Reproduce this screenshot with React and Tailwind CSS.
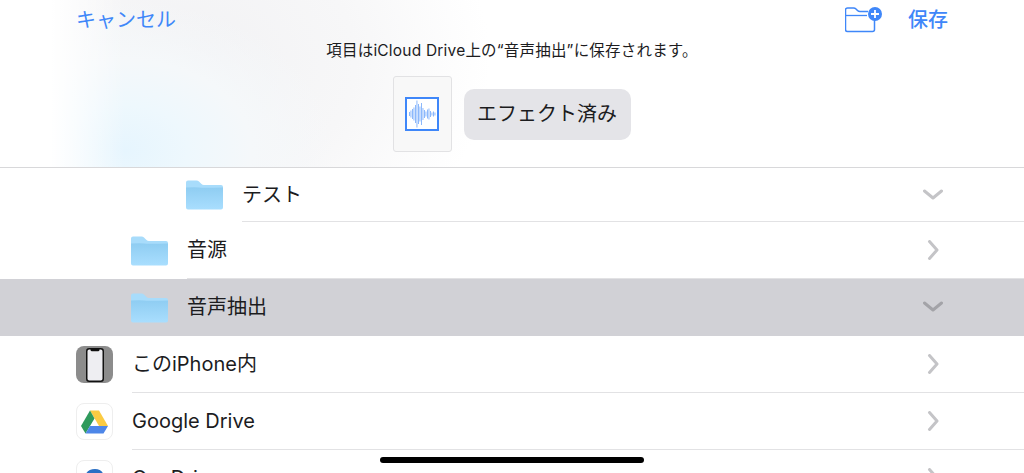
import React from 'react';

const rows = [
  { label: 'テスト', pad: 'pl-[186px]', icon: 'folder', open: true, height: 'h-[54px]' },
  { label: '音源', pad: 'pl-[131px]', icon: 'folder', height: 'h-[57px]' },
  { label: '音声抽出', pad: 'pl-[131px]', icon: 'folder', open: true, selected: true, height: 'h-[57px]' },
  { label: 'このiPhone内', pad: 'pl-[76px]', icon: 'iphone', height: 'h-[57px]' },
  { label: 'Google Drive', pad: 'pl-[76px]', icon: 'drive', height: 'h-[57px]' },
  { label: 'OneDrive', pad: 'pl-[76px]', icon: 'onedrive', height: 'h-[57px]' },
];

function FolderIcon() {
  return (
    <svg width="37" height="30" viewBox="0 0 37 30" className="shrink-0">
      <defs>
        <linearGradient id="folderFront" x1="0" y1="0" x2="0" y2="1">
          <stop offset="0" stopColor="#8fcdf2" />
          <stop offset="1" stopColor="#a9defe" />
        </linearGradient>
      </defs>
      <path d="M0 2.500A2 2 0 0 1 2 .5h8.500q1.500 0 2.500 1l2.500 2.500q1 1 2.500 1H35a2 2 0 0 1 2 2V10H0z" fill="#a8dcfb" />
      <path d="M0 7.500Q10 7 13 7.500T37 7.500V27.500a2 2 0 0 1-2 2H2a2 2 0 0 1-2-2z" fill="url(#folderFront)" />
    </svg>
  );
}

function IphoneIcon() {
  return (
    <div className="w-[37px] h-[37px] shrink-0 rounded-lg bg-[#8c8c8c] flex items-center justify-center">
      <svg width="18" height="34" viewBox="0 0 18 34">
        <rect x="0.750" y="0.750" width="16.500" height="32.500" rx="2.500" fill="#eeeef2" stroke="#111" strokeWidth="1.500" />
        <path d="M4.500 0.750h9v1a1.500 1.500 0 0 1-1.500 1.500H6a1.500 1.500 0 0 1-1.500-1.500z" fill="#111" />
      </svg>
    </div>
  );
}

function DriveIcon() {
  return (
    <div className="w-[37px] h-[37px] shrink-0 rounded-lg bg-white border border-[#eeeeee] flex items-center justify-center">
      <svg width="27" height="24" viewBox="0 0 27 24">
        <path d="M9 0.500h9l9 15.500h-9z" fill="#fbcb43" />
        <path d="M9 0.500l4.500 8L4.500 23.500 0 16z" fill="#2f9a5c" />
        <path d="M9 16h18l-4.500 7.500H4.500z" fill="#4d86e8" />
      </svg>
    </div>
  );
}

function OneDriveIcon() {
  return (
    <div className="w-[37px] h-[37px] shrink-0 rounded-lg bg-white border border-[#eeeeee] flex justify-center pt-[7px]">
      <svg width="30" height="22" viewBox="0 0 30 22">
        <path d="M6 21a5.500 5.500 0 0 1-1.500-10.800Q6 1 15 1q6.500 0 8.500 5.500a7 7 0 0 1 .5 14.500z" fill="#2a6fc4" />
      </svg>
    </div>
  );
}

function Chevron({ open, selected }) {
  const stroke = selected ? '#a3a3a8' : '#c4c4c7';
  return (
    <svg width="20" height="20" viewBox="0 0 20 20" className="shrink-0" fill="none" stroke={stroke} strokeWidth="3" strokeLinecap="round" strokeLinejoin="round">
      {open ? <path d="M1.500 6 10 13l8.500-7" /> : <path d="M6.500 1.500 14 10l-7.500 8.500" />}
    </svg>
  );
}

function Waveform() {
  const bars = [4, 7, 10, 13, 18, 27, 20, 15, 22, 12, 8, 5, 9, 11, 6, 3, 5, 3];
  return (
    <svg width="34" height="34" viewBox="0 0 34 34">
      <rect x="1" y="1" width="32" height="32" fill="#fff" stroke="#3f87f9" strokeWidth="2" />
      {bars.map((h, i) => (
        <rect key={i} x={4 + i * 1.500} y={17 - h / 2} width="0.900" height={h} fill="#7fb0fb" />
      ))}
    </svg>
  );
}

function NewFolderIcon() {
  return (
    <svg width="38" height="26" viewBox="0 0 38 26" fill="none">
      <path d="M29.500 12v10.500a2 2 0 0 1-2 2H2.500a2 2 0 0 1-2-2V3a2 2 0 0 1 2-2h6q1.500 0 2.500 1l1.500 1.500q1 1 2.500 1H23" stroke="#3f87f9" strokeWidth="1.500" />
      <path d="M1 8.500h21" stroke="#3f87f9" strokeWidth="1.300" />
      <circle cx="30" cy="7" r="7" fill="#3f87f9" />
      <path d="M30 3v8M26 7h8" stroke="#fff" strokeWidth="1.800" />
    </svg>
  );
}

function Row({ row }) {
  return (
    <div className={`${row.height} ${row.pad} flex items-center gap-[19px] ${row.selected ? 'bg-[#d1d1d6]' : 'bg-white'}`}>
      {row.icon === 'folder' && <FolderIcon />}
      {row.icon === 'iphone' && <IphoneIcon />}
      {row.icon === 'drive' && <DriveIcon />}
      {row.icon === 'onedrive' && <OneDriveIcon />}
      <div className={`flex-1 h-full flex items-center justify-between pr-[81px] border-b ${row.selected ? 'border-transparent' : 'border-[#e2e2e4]'}`}>
        <span className="text-[20px] text-[#1c1c1e]">{row.label}</span>
        <Chevron open={row.open} selected={row.selected} />
      </div>
    </div>
  );
}

export default function App() {
  return (
    <div className="relative w-[1024px] h-[473px] overflow-hidden bg-white font-['Inter','Noto_Sans_CJK_JP',sans-serif]">
      {/* save sheet header */}
      <div className="h-[168px] border-b border-[#d8d8da] flex flex-col bg-[linear-gradient(to_right,#ffffff_50px,#ffffff00_125px),radial-gradient(ellipse_210px_150px_at_125px_150px,#e6f5fe_0%,#eef8fd_30%,#f5f8fa_60%,#ffffff00_100%),radial-gradient(ellipse_300px_240px_at_190px_60px,#f2f2f4_0%,#f7f7f8_55%,#ffffff_100%)]">
        <div className="h-[40px] pl-[76px] pr-[76px] flex items-center justify-between">
          <span className="text-[20px] text-[#3f87f9]">キャンセル</span>
          <div className="flex items-center gap-[25px]">
            <NewFolderIcon />
            <span className="text-[20px] font-medium text-[#3f87f9]">保存</span>
          </div>
        </div>
        <p className="h-[20px] mt-[1px] leading-[20px] text-center text-[15.500px] tracking-[0.200px] text-[#1c1c1e]">項目はiCloud Drive上の“音声抽出”に保存されます。</p>
        <div className="mt-[15px] flex items-center justify-center gap-[12px] pr-[1px]">
          <div className="w-[59px] h-[76px] rounded-[3px] border border-[#e2e2e4] bg-[#f8f8f8] flex items-center justify-center">
            <Waveform />
          </div>
          <div className="w-[167px] h-[51px] rounded-[10px] bg-[#e4e4e8] flex items-center justify-center text-[20px] text-[#1c1c1e]">エフェクト済み</div>
        </div>
      </div>

      {rows.map((row) => (
        <Row key={row.label} row={row} />
      ))}

      {/* home indicator */}
      <div className="absolute left-[380px] top-[457px] w-[264px] h-[6px] rounded-full bg-black" />
    </div>
  );
}
